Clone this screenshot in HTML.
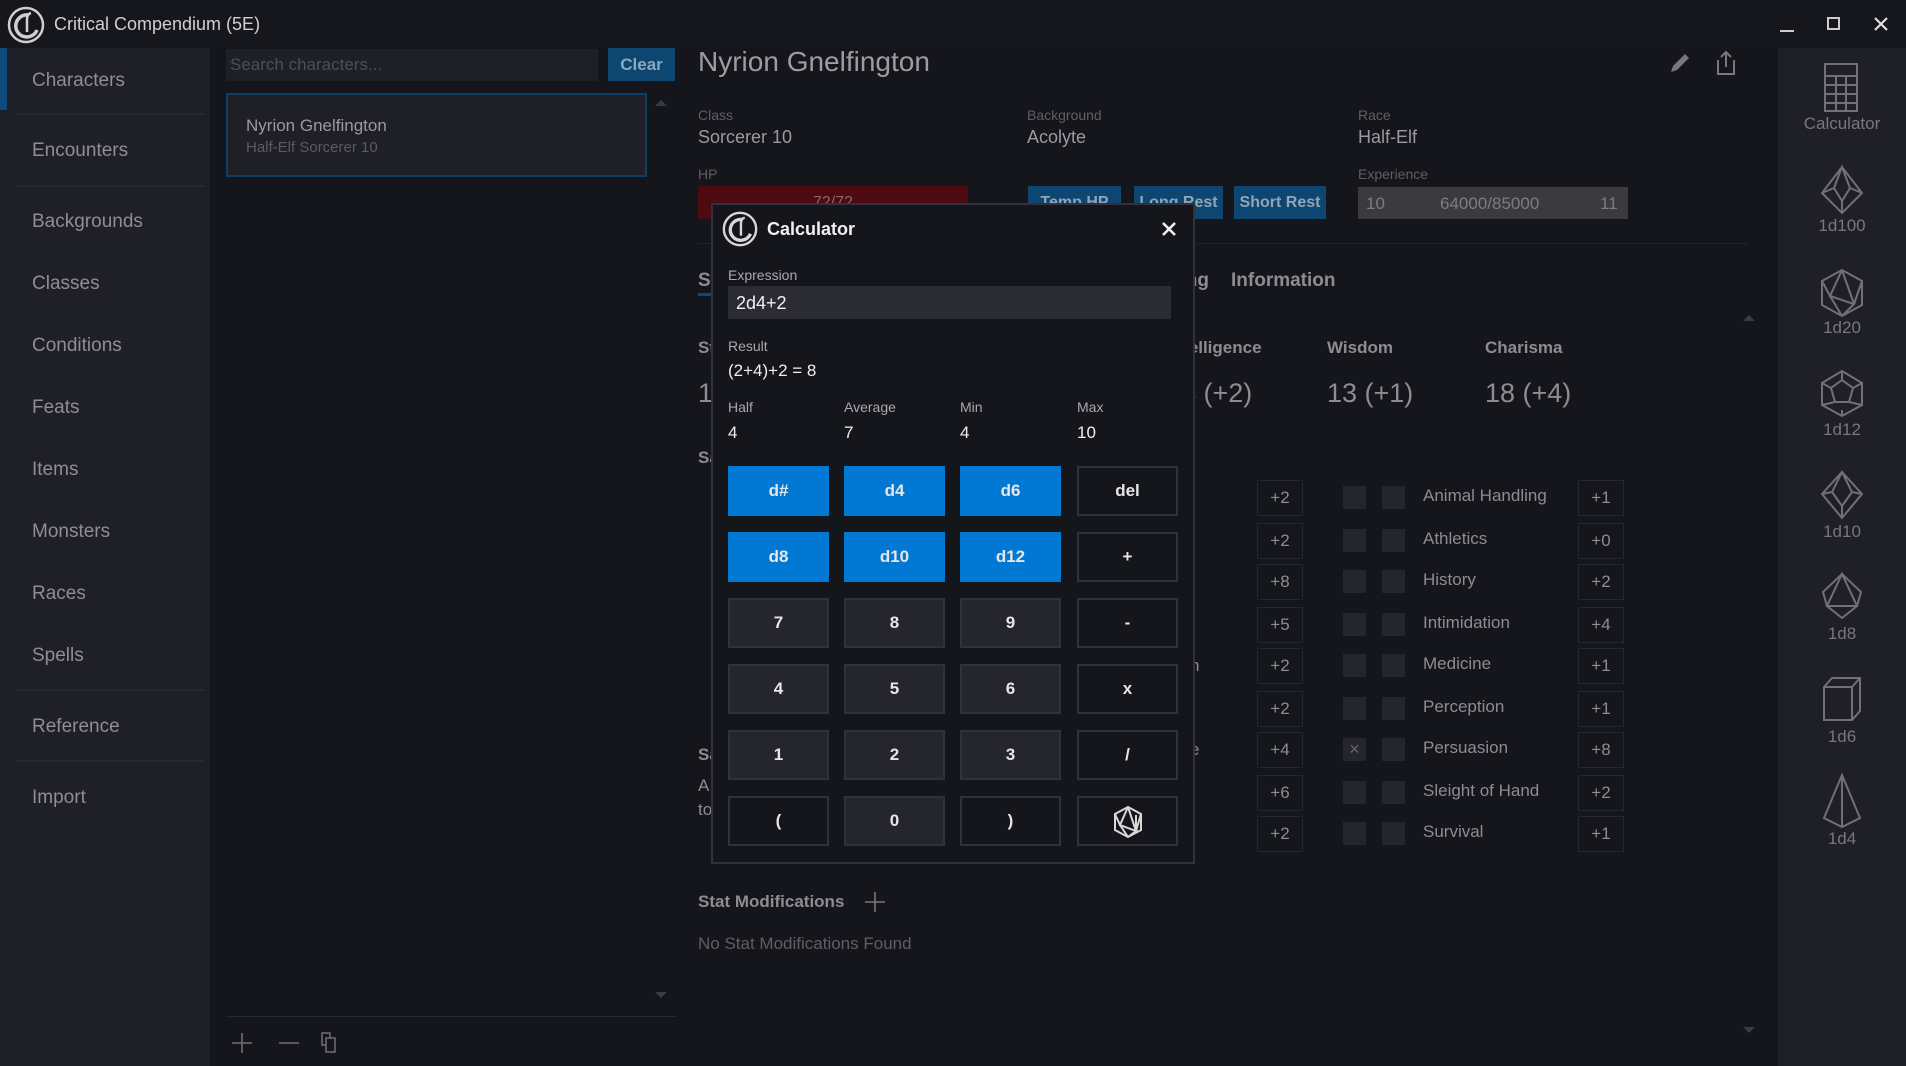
<!DOCTYPE html>
<html><head><meta charset="utf-8"><style>
*{margin:0;padding:0;box-sizing:border-box}
body{width:1906px;height:1066px;background:#15161b;font-family:"Liberation Sans",sans-serif;position:relative;overflow:hidden;color:#8c8c92}
.a{position:absolute;white-space:nowrap}
.side{left:0;top:48px;width:210px;height:1018px;background:#1e1f27}
.nav{left:32px;font-size:19px;color:#8e8e94;transform:translateY(-50%)}
.sep{left:15px;width:190px;height:2px;background:#26272f}
.lbl{font-size:14px;color:#5e5e64}
.val{font-size:18px;color:#9a9aa0}
.btnb{background:#0d4670;color:#8fa6b8;font-weight:bold;font-size:16px;text-align:center;line-height:33px}
.mb{width:46px;height:36px;border:1px solid #26272e;color:#8c8c92;font-size:17px;text-align:center;line-height:34px}
.cb{width:23px;height:23px;background:#25262d}
.sk{font-size:17px;color:#8c8c92}
.dl{font-size:17px;color:#77777d;left:1778px;width:128px;text-align:center}
.cbtn{position:absolute;width:101px;height:50px;border:2px solid #30313a;font-weight:bold;font-size:17px;color:#e6e6e6;text-align:center;line-height:46px}
.blue{background:#0078d4;border-color:#0078d4}
.num{background:#25262d}
.op{background:#15161b}
.ml{font-size:14px;color:#a8a8ae}
.mv{font-size:17px;color:#f0f0f0}
</style></head><body>
<!-- title bar -->
<div class="a" style="left:0;top:0;width:1906px;height:48px;background:#16171c"></div>
<svg class="a" style="left:6px;top:5px" width="40" height="40" viewBox="0 0 40 40"><circle cx="20" cy="20" r="17" fill="none" stroke="#cfcfcf" stroke-width="2.5"/><path d="M22 10 A11 11 0 1 0 31 25" fill="none" stroke="#cfcfcf" stroke-width="3.5"/><path d="M21 27 L21 14 Q21 9 25 8" fill="none" stroke="#cfcfcf" stroke-width="2.5"/></svg>
<div class="a" style="left:54px;top:14px;font-size:18px;color:#d0d0d0">Critical Compendium (5E)</div>
<div class="a" style="left:1780px;top:30px;width:14px;height:2px;background:#ccc"></div>
<div class="a" style="left:1827px;top:17px;width:13px;height:13px;border:2px solid #ccc"></div>
<svg class="a" style="left:1874px;top:17px" width="14" height="14"><path d="M1 1L13 13M13 1L1 13" stroke="#ddd" stroke-width="2.2"/></svg>

<!-- sidebar -->
<div class="a side"></div>
<div class="a" style="left:0;top:48px;width:7px;height:62px;background:#0f4a7a"></div>
<div class="a nav" style="top:81px">Characters</div>
<div class="a sep" style="top:113px"></div>
<div class="a nav" style="top:151px">Encounters</div>
<div class="a sep" style="top:185px"></div>
<div class="a nav" style="top:222px">Backgrounds</div>
<div class="a nav" style="top:284px">Classes</div>
<div class="a nav" style="top:346px">Conditions</div>
<div class="a nav" style="top:408px">Feats</div>
<div class="a nav" style="top:470px">Items</div>
<div class="a nav" style="top:532px">Monsters</div>
<div class="a nav" style="top:594px">Races</div>
<div class="a nav" style="top:656px">Spells</div>
<div class="a sep" style="top:689px"></div>
<div class="a nav" style="top:727px">Reference</div>
<div class="a sep" style="top:760px"></div>
<div class="a nav" style="top:798px">Import</div>

<!-- list panel -->
<div class="a" style="left:226px;top:49px;width:372px;height:32px;background:#1e1f27"></div>
<div class="a" style="left:230px;top:55px;font-size:17px;color:#4e4f56">Search characters...</div>
<div class="a btnb" style="left:608px;top:48px;width:67px;height:33px;font-size:17px">Clear</div>
<div class="a" style="left:226px;top:93px;width:421px;height:84px;border:2px solid #0c3f66;background:#1e1f27"></div>
<div class="a" style="left:246px;top:116px;font-size:17px;color:#9a9aa0">Nyrion Gnelfington</div>
<div class="a" style="left:246px;top:139px;font-size:15px;color:#5a5a60">Half-Elf Sorcerer 10</div>
<svg class="a" style="left:655px;top:99px" width="12" height="8"><path d="M0 7L6 1L12 7Z" fill="#3a3b42"/></svg>
<svg class="a" style="left:655px;top:991px" width="12" height="8"><path d="M0 1L6 7L12 1Z" fill="#3a3b42"/></svg>
<div class="a" style="left:226px;top:1016px;width:450px;height:1px;background:#26272f"></div>
<svg class="a" style="left:232px;top:1032px" width="120" height="22"><path d="M10 1V21M0 11H20" stroke="#6e6e74" stroke-width="1.6"/><path d="M47 11H67" stroke="#6e6e74" stroke-width="1.6"/><rect x="90" y="1" width="8" height="12" fill="none" stroke="#6e6e74" stroke-width="1.5"/><rect x="94" y="6" width="9" height="14" fill="#15161b" stroke="#6e6e74" stroke-width="1.5"/></svg>

<!-- main -->
<div class="a" style="left:698px;top:46px;font-size:28px;color:#9c9ca2">Nyrion Gnelfington</div>
<svg class="a" style="left:1668px;top:51px" width="24" height="24"><path d="M3 21L5 15L17 3L21 7L9 19Z" fill="#77777d"/></svg>
<svg class="a" style="left:1715px;top:50px" width="22" height="26"><path d="M3 10V24H19V10M11 17V2M6 7L11 2L16 7" fill="none" stroke="#77777d" stroke-width="2"/></svg>
<div class="a lbl" style="left:698px;top:107px">Class</div>
<div class="a val" style="left:698px;top:127px">Sorcerer 10</div>
<div class="a lbl" style="left:1027px;top:107px">Background</div>
<div class="a val" style="left:1027px;top:127px">Acolyte</div>
<div class="a lbl" style="left:1358px;top:107px">Race</div>
<div class="a val" style="left:1358px;top:127px">Half-Elf</div>
<div class="a lbl" style="left:698px;top:166px">HP</div>
<div class="a" style="left:698px;top:186px;width:270px;height:33px;background:#4d0a10;color:#8a6a6a;text-align:center;line-height:33px;font-size:16px">72/72</div>
<div class="a btnb" style="left:1028px;top:186px;width:93px;height:33px">Temp HP</div>
<div class="a btnb" style="left:1134px;top:186px;width:89px;height:33px">Long Rest</div>
<div class="a btnb" style="left:1234px;top:186px;width:92px;height:33px">Short Rest</div>
<div class="a lbl" style="left:1358px;top:166px">Experience</div>
<div class="a" style="left:1358px;top:187px;width:270px;height:32px;background:#3a3a3f"></div>
<div class="a" style="left:1366px;top:194px;font-size:17px;color:#7c7c82">10</div>
<div class="a" style="left:1440px;top:194px;font-size:17px;color:#7c7c82">64000/85000</div>
<div class="a" style="left:1600px;top:194px;font-size:17px;color:#7c7c82">11</div>
<div class="a" style="left:698px;top:243px;width:1050px;height:1px;background:#202129"></div>
<div class="a" style="left:698px;top:270px;font-size:19px;font-weight:bold;color:#8c8c92">Stats</div>
<div class="a" style="left:698px;top:293px;width:40px;height:3px;background:#0c4a7a"></div>
<div class="a" style="left:1097px;top:270px;font-size:19px;font-weight:bold;color:#8c8c92">Spellcasting</div>
<div class="a" style="left:1231px;top:270px;font-size:19px;font-weight:bold;color:#8c8c92">Information</div>
<svg class="a" style="left:1743px;top:314px" width="12" height="8"><path d="M0 7L6 1L12 7Z" fill="#3a3b42"/></svg>
<svg class="a" style="left:1743px;top:1026px" width="12" height="8"><path d="M0 1L6 7L12 1Z" fill="#3a3b42"/></svg>
<div class="a" style="left:698px;top:338px;font-size:17px;font-weight:bold;color:#8c8c92">Strength</div>
<div class="a" style="left:1168px;top:338px;font-size:17px;font-weight:bold;color:#8c8c92">Intelligence</div>
<div class="a" style="left:1327px;top:338px;font-size:17px;font-weight:bold;color:#8c8c92">Wisdom</div>
<div class="a" style="left:1485px;top:338px;font-size:17px;font-weight:bold;color:#8c8c92">Charisma</div>
<div class="a" style="left:698px;top:378px;font-size:27px;color:#8c8c92">10 (+0)</div>
<div class="a" style="left:1166px;top:378px;font-size:27px;color:#8c8c92">14 (+2)</div>
<div class="a" style="left:1327px;top:378px;font-size:27px;color:#8c8c92">13 (+1)</div>
<div class="a" style="left:1485px;top:378px;font-size:27px;color:#8c8c92">18 (+4)</div>
<div class="a" style="left:698px;top:448px;font-size:17px;font-weight:bold;color:#8c8c92">Saving Throws</div>
<div class="a" style="left:698px;top:745px;font-size:17px;font-weight:bold;color:#8c8c92">Saves</div>
<div class="a" style="left:698px;top:776px;font-size:17px;color:#8c8c92">A</div>
<div class="a" style="left:698px;top:800px;font-size:17px;color:#8c8c92">to</div>
<div class="a" style="left:1190px;top:656px;font-size:17px;color:#8c8c92">n</div>
<div class="a" style="left:1190px;top:740px;font-size:17px;color:#8c8c92">e</div>

<!-- skill rows -->
<div class="a mb" style="left:1257px;top:480px">+2</div>
<div class="a mb" style="left:1257px;top:523px">+2</div>
<div class="a mb" style="left:1257px;top:564px">+8</div>
<div class="a mb" style="left:1257px;top:607px">+5</div>
<div class="a mb" style="left:1257px;top:648px">+2</div>
<div class="a mb" style="left:1257px;top:691px">+2</div>
<div class="a mb" style="left:1257px;top:732px">+4</div>
<div class="a mb" style="left:1257px;top:775px">+6</div>
<div class="a mb" style="left:1257px;top:816px">+2</div>

<div class="a cb" style="left:1343px;top:486px"></div><div class="a cb" style="left:1382px;top:486px"></div><div class="a sk" style="left:1423px;top:486px">Animal Handling</div><div class="a mb" style="left:1578px;top:480px">+1</div>
<div class="a cb" style="left:1343px;top:529px"></div><div class="a cb" style="left:1382px;top:529px"></div><div class="a sk" style="left:1423px;top:529px">Athletics</div><div class="a mb" style="left:1578px;top:523px">+0</div>
<div class="a cb" style="left:1343px;top:570px"></div><div class="a cb" style="left:1382px;top:570px"></div><div class="a sk" style="left:1423px;top:570px">History</div><div class="a mb" style="left:1578px;top:564px">+2</div>
<div class="a cb" style="left:1343px;top:613px"></div><div class="a cb" style="left:1382px;top:613px"></div><div class="a sk" style="left:1423px;top:613px">Intimidation</div><div class="a mb" style="left:1578px;top:607px">+4</div>
<div class="a cb" style="left:1343px;top:654px"></div><div class="a cb" style="left:1382px;top:654px"></div><div class="a sk" style="left:1423px;top:654px">Medicine</div><div class="a mb" style="left:1578px;top:648px">+1</div>
<div class="a cb" style="left:1343px;top:697px"></div><div class="a cb" style="left:1382px;top:697px"></div><div class="a sk" style="left:1423px;top:697px">Perception</div><div class="a mb" style="left:1578px;top:691px">+1</div>
<div class="a cb" style="left:1343px;top:738px;color:#66666c;font-size:18px;text-align:center;line-height:22px">×</div><div class="a cb" style="left:1382px;top:738px"></div><div class="a sk" style="left:1423px;top:738px">Persuasion</div><div class="a mb" style="left:1578px;top:732px">+8</div>
<div class="a cb" style="left:1343px;top:781px"></div><div class="a cb" style="left:1382px;top:781px"></div><div class="a sk" style="left:1423px;top:781px">Sleight of Hand</div><div class="a mb" style="left:1578px;top:775px">+2</div>
<div class="a cb" style="left:1343px;top:822px"></div><div class="a cb" style="left:1382px;top:822px"></div><div class="a sk" style="left:1423px;top:822px">Survival</div><div class="a mb" style="left:1578px;top:816px">+1</div>

<div class="a" style="left:698px;top:892px;font-size:17px;font-weight:bold;color:#8c8c92">Stat Modifications</div>
<svg class="a" style="left:865px;top:892px" width="20" height="20"><path d="M10 0V20M0 10H20" stroke="#77777d" stroke-width="1.6"/></svg>
<div class="a" style="left:698px;top:934px;font-size:17px;color:#5e5e64">No Stat Modifications Found</div>

<!-- dice rail -->
<div class="a" style="left:1778px;top:48px;width:128px;height:1018px;background:#1e1f27"></div>
<svg class="a" style="left:1778px;top:60px" width="128" height="800" viewBox="0 0 128 800" fill="none" stroke="#707076" stroke-width="2">
<rect x="47" y="4" width="32" height="47"/><path d="M47 16H79M47 25H79M47 34H79M47 43H79M58 16V51M68 16V51"/>
<path d="M64 107L84 133L64 153L44 133Z M64 107L56 128L64 141L72 128Z M44 133L56 128 M84 133L72 128 M64 141V153"/>
<path d="M64 210L84 221V245L64 256L44 245V221Z M64 210L52 236L76 244L64 256 M52 236L44 221 M52 236L64 256 M76 244L84 221 M76 244L64 210"/>
<path d="M64 311L84 323L84 345L64 356L44 345L44 323Z M64 320L75 328L71 342H57L53 328Z M64 311V320 M84 323L75 328 M84 345L71 342 M44 345L57 342 M44 323L53 328 M64 356V350"/>
<path d="M64 412L84 434L64 458L44 434Z M64 412L54 432L64 446L74 432Z M44 434L54 432M84 434L74 432M64 446V458"/>
<g transform="translate(0,18)"><path d="M64 496L83 514L79 528L64 540L49 528L45 514Z M64 496L49 528H79Z"/></g>
<g transform="translate(0,40)"><path d="M46 587L54 578H82V611L74 620H46Z M46 587H74V620 M74 587L82 578"/></g>
<g transform="translate(0,50)"><path d="M64 665L46 708L64 717L82 708Z M64 665V717"/></g>
</svg>
<div class="a dl" style="top:114px">Calculator</div>
<div class="a dl" style="top:216px">1d100</div>
<div class="a dl" style="top:318px">1d20</div>
<div class="a dl" style="top:420px">1d12</div>
<div class="a dl" style="top:522px">1d10</div>
<div class="a dl" style="top:624px">1d8</div>
<div class="a dl" style="top:727px">1d6</div>
<div class="a dl" style="top:829px">1d4</div>

<!-- modal -->
<div class="a" style="left:711px;top:203px;width:484px;height:661px;background:#15161b;border:2px solid #30313c"></div>
<svg class="a" style="left:721px;top:210px" width="38" height="38" viewBox="0 0 40 40"><circle cx="20" cy="20" r="17" fill="none" stroke="#d8d8d8" stroke-width="2.5"/><path d="M22 10 A11 11 0 1 0 31 25" fill="none" stroke="#d8d8d8" stroke-width="3.5"/><path d="M21 27 L21 14 Q21 9 25 8" fill="none" stroke="#d8d8d8" stroke-width="2.5"/></svg>
<div class="a" style="left:767px;top:219px;font-size:18px;font-weight:bold;color:#f0f0f0">Calculator</div>
<svg class="a" style="left:1161px;top:221px" width="16" height="16"><path d="M2 2L14 14M14 2L2 14" stroke="#f0f0f0" stroke-width="2.6"/></svg>
<div class="a ml" style="left:728px;top:267px">Expression</div>
<div class="a" style="left:728px;top:286px;width:443px;height:33px;background:#2a2b33"></div>
<div class="a" style="left:736px;top:293px;font-size:18px;color:#f0f0f0">2d4+2</div>
<div class="a ml" style="left:728px;top:338px">Result</div>
<div class="a mv" style="left:728px;top:361px">(2+4)+2 = 8</div>
<div class="a ml" style="left:728px;top:399px">Half</div>
<div class="a ml" style="left:844px;top:399px">Average</div>
<div class="a ml" style="left:960px;top:399px">Min</div>
<div class="a ml" style="left:1077px;top:399px">Max</div>
<div class="a mv" style="left:728px;top:423px">4</div>
<div class="a mv" style="left:844px;top:423px">7</div>
<div class="a mv" style="left:960px;top:423px">4</div>
<div class="a mv" style="left:1077px;top:423px">10</div>

<div class="cbtn blue" style="left:728px;top:466px">d#</div>
<div class="cbtn blue" style="left:844px;top:466px">d4</div>
<div class="cbtn blue" style="left:960px;top:466px">d6</div>
<div class="cbtn op" style="left:1077px;top:466px">del</div>
<div class="cbtn blue" style="left:728px;top:532px">d8</div>
<div class="cbtn blue" style="left:844px;top:532px">d10</div>
<div class="cbtn blue" style="left:960px;top:532px">d12</div>
<div class="cbtn op" style="left:1077px;top:532px">+</div>
<div class="cbtn num" style="left:728px;top:598px">7</div>
<div class="cbtn num" style="left:844px;top:598px">8</div>
<div class="cbtn num" style="left:960px;top:598px">9</div>
<div class="cbtn op" style="left:1077px;top:598px">-</div>
<div class="cbtn num" style="left:728px;top:664px">4</div>
<div class="cbtn num" style="left:844px;top:664px">5</div>
<div class="cbtn num" style="left:960px;top:664px">6</div>
<div class="cbtn op" style="left:1077px;top:664px">x</div>
<div class="cbtn num" style="left:728px;top:730px">1</div>
<div class="cbtn num" style="left:844px;top:730px">2</div>
<div class="cbtn num" style="left:960px;top:730px">3</div>
<div class="cbtn op" style="left:1077px;top:730px">/</div>
<div class="cbtn op" style="left:728px;top:796px">(</div>
<div class="cbtn num" style="left:844px;top:796px">0</div>
<div class="cbtn op" style="left:960px;top:796px">)</div>
<div class="cbtn op" style="left:1077px;top:796px"></div>
<svg class="a" style="left:1111px;top:805px" width="34" height="34" viewBox="0 0 34 34" fill="none" stroke="#d8d8d8" stroke-width="2"><path d="M17 2L30 9V25L17 32L4 25V9Z M17 2L9 20L25 26L17 32 M9 20L4 9 M9 20L17 32 M25 26L30 9 M25 26L17 2 M25 10V26"/></svg>
</body></html>
